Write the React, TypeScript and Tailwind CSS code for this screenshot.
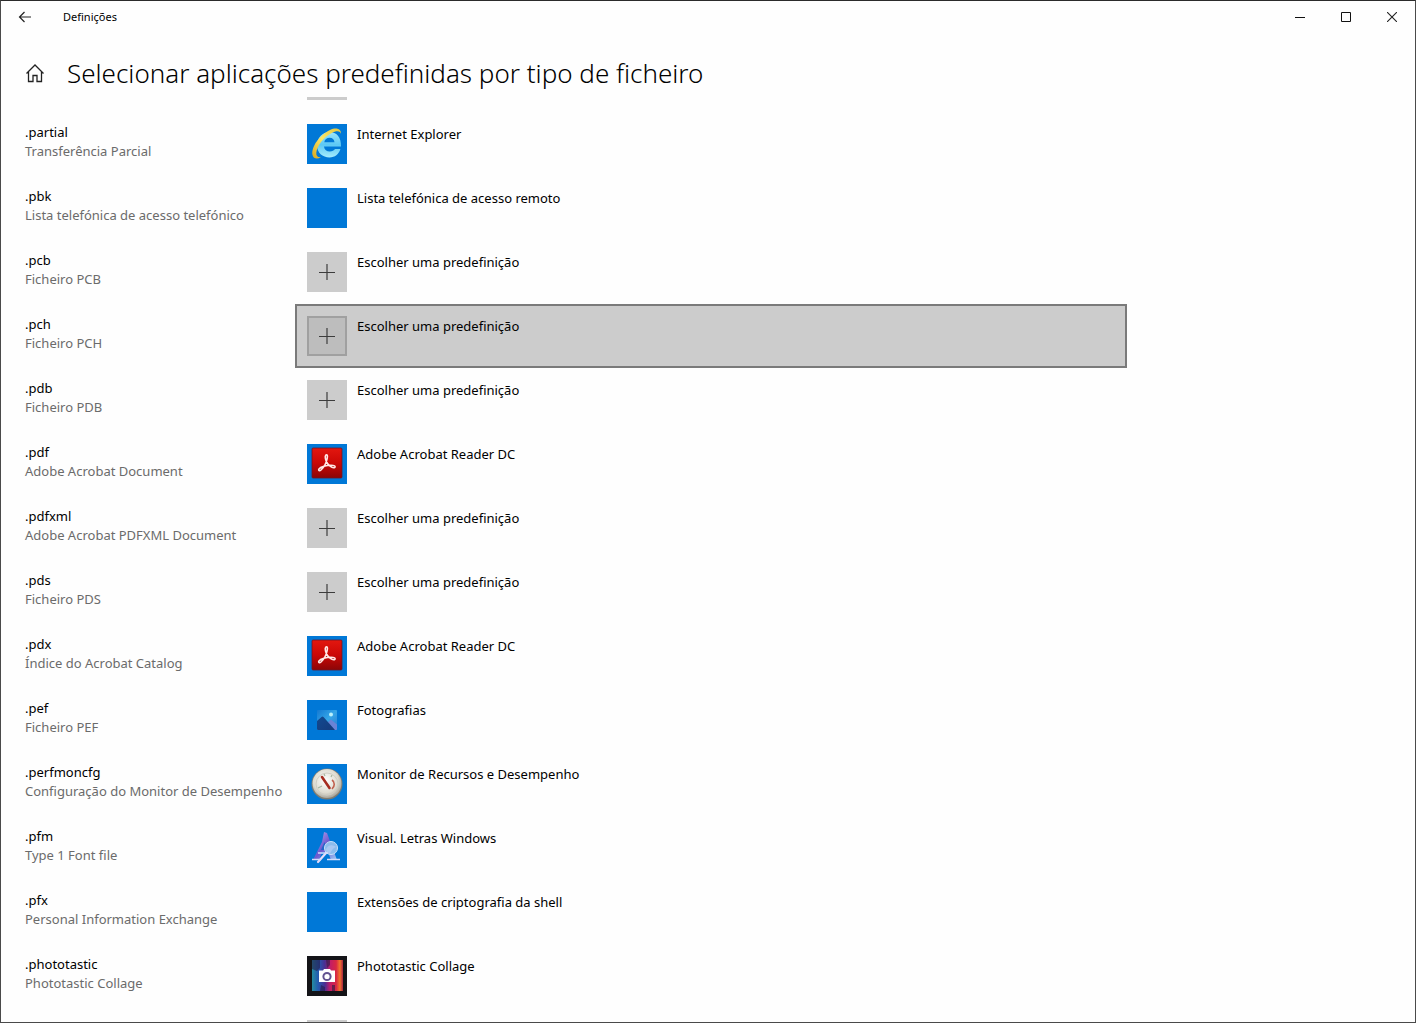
import { useLayoutEffect, useRef, useState } from "react";
import type { ReactNode } from "react";

type IconName = "choose" | "blank" | "ie" | "acrobat" | "photos" | "perfmon" | "fonts" | "phototastic";

interface FileType {
  ext: string;
  description: string;
  app: string;
  icon: IconName;
}

const CHOOSE = "Escolher uma predefinição";
const SCROLL_START = 49;

const fileTypes: FileType[] = [
  { ext: "", description: "", app: "", icon: "choose" },
  { ext: ".partial", description: "Transferência Parcial", app: "Internet Explorer", icon: "ie" },
  { ext: ".pbk", description: "Lista telefónica de acesso telefónico", app: "Lista telefónica de acesso remoto", icon: "blank" },
  { ext: ".pcb", description: "Ficheiro PCB", app: CHOOSE, icon: "choose" },
  { ext: ".pch", description: "Ficheiro PCH", app: CHOOSE, icon: "choose" },
  { ext: ".pdb", description: "Ficheiro PDB", app: CHOOSE, icon: "choose" },
  { ext: ".pdf", description: "Adobe Acrobat Document", app: "Adobe Acrobat Reader DC", icon: "acrobat" },
  { ext: ".pdfxml", description: "Adobe Acrobat PDFXML Document", app: CHOOSE, icon: "choose" },
  { ext: ".pds", description: "Ficheiro PDS", app: CHOOSE, icon: "choose" },
  { ext: ".pdx", description: "Índice do Acrobat Catalog", app: "Adobe Acrobat Reader DC", icon: "acrobat" },
  { ext: ".pef", description: "Ficheiro PEF", app: "Fotografias", icon: "photos" },
  { ext: ".perfmoncfg", description: "Configuração do Monitor de Desempenho", app: "Monitor de Recursos e Desempenho", icon: "perfmon" },
  { ext: ".pfm", description: "Type 1 Font file", app: "Visual. Letras Windows", icon: "fonts" },
  { ext: ".pfx", description: "Personal Information Exchange", app: "Extensões de criptografia da shell", icon: "blank" },
  { ext: ".phototastic", description: "Phototastic Collage", app: "Phototastic Collage", icon: "phototastic" },
  { ext: "", description: "", app: "", icon: "choose" },
];

const Svg = ({ children }: { children: ReactNode }) => (
  <svg viewBox="0 0 40 40" className="size-full" aria-hidden="true">
    {children}
  </svg>
);

const icons: Record<IconName, ReactNode> = {
  blank: null,
  choose: (
    <Svg>
      <path d="M12 20.500h16M20 12v16" stroke="#3c3c3c" strokeWidth="1.200" fill="none" />
    </Svg>
  ),
  ie: (
    <Svg>
      <defs>
        <linearGradient id="ieBlue" x1="0" y1="0" x2="0" y2="1">
          <stop offset="0" stopColor="#9fe6fb" />
          <stop offset="0.500" stopColor="#5cc8f4" />
          <stop offset="1" stopColor="#a5ecfc" />
        </linearGradient>
        <linearGradient id="ieRing" x1="0" y1="1" x2="1" y2="0">
          <stop offset="0" stopColor="#d9a81c" />
          <stop offset="0.500" stopColor="#fbe667" />
          <stop offset="1" stopColor="#e3c43f" />
        </linearGradient>
      </defs>
      <path
        d="M34 22.500H17c.3 3.300 2.700 5 5.800 5 2.500 0 4.200-.9 5.200-2.400h5.400C31.700 30.400 28 33.500 22.500 33.500 15.500 33.500 10 28.800 10 21.300 10 13.500 15.700 8 22.500 8 29.500 8 34.300 13 34 22.500zM27.500 18.200c-.3-2.700-2-4.400-4.900-4.400s-4.900 1.700-5.300 4.400z"
        fill="url(#ieBlue)"
        fillRule="evenodd"
      />
      <path
        d="M34 10C34.500 5 29.500 2.800 23 6 12.500 11 4 23 5.500 31c.8 4 4.800 4.500 8.500 2.200-3.200.4-5-1-4.700-4.400.7-7 7-15.500 15-19.600 5-2.500 9-2.700 9.700.8z"
        fill="url(#ieRing)"
      />
    </Svg>
  ),
  acrobat: (
    <Svg>
      <defs>
        <linearGradient id="pdfRed" x1="0" y1="0" x2="0" y2="1">
          <stop offset="0" stopColor="#e3170f" />
          <stop offset="0.500" stopColor="#cb0806" />
          <stop offset="1" stopColor="#8b0507" />
        </linearGradient>
      </defs>
      <rect x="5" y="4" width="30" height="30" rx="1" fill="url(#pdfRed)" stroke="#691728" strokeWidth="0.800" />
      <path
        d="M18.700 11.200c1.200-1.400 2.200.3 1.500 3.200-.8 4-3.700 9.300-6.200 11.600-1.500 1.300-3 .5-2-1 1.500-2.200 7.500-3.800 12-3.800 3.200 0 4.800 1.200 3.800 2.200-1.300 1.200-5-.6-7.300-3.900-1.900-2.800-2.900-6.900-1.800-8.300z"
        fill="none"
        stroke="#ffe9e6"
        strokeWidth="1.600"
      />
    </Svg>
  ),
  photos: (
    <Svg>
      <defs>
        <linearGradient id="photoSky" x1="0" y1="0" x2="1" y2="1">
          <stop offset="0" stopColor="#1479d2" />
          <stop offset="0.500" stopColor="#35a6e8" />
          <stop offset="1" stopColor="#2c79cf" />
        </linearGradient>
        <linearGradient id="photoHill" x1="0" y1="0" x2="1" y2="1">
          <stop offset="0" stopColor="#124a91" />
          <stop offset="1" stopColor="#153b7c" />
        </linearGradient>
      </defs>
      <rect x="10" y="10" width="20" height="20" rx="1" fill="url(#photoSky)" />
      <path d="M19 24l5-4.500 6 5V29a1 1 0 0 1-1 1h-9z" fill="#6a83d6" />
      <path d="M10 21l4.500-4a1.500 1.500 0 0 1 2 0L28 30H11a1 1 0 0 1-1-1z" fill="url(#photoHill)" />
      <circle cx="24" cy="14.500" r="2" fill="#b8f0fb" />
    </Svg>
  ),
  perfmon: (
    <Svg>
      <defs>
        <radialGradient id="dial" cx="0.450" cy="0.400" r="0.600">
          <stop offset="0" stopColor="#ffffff" />
          <stop offset="0.700" stopColor="#dedbd0" />
          <stop offset="1" stopColor="#aaa79d" />
        </radialGradient>
      </defs>
      <circle cx="20" cy="20" r="15.500" fill="#817c70" />
      <circle cx="20" cy="19.500" r="14.500" fill="url(#dial)" />
      <circle cx="20" cy="20" r="11" fill="none" stroke="#d0cec4" strokeWidth="1" />
      <path d="M15 13l7.500 11" stroke="#a62c20" strokeWidth="2.600" strokeLinecap="round" />
      <path d="M25 16c3 2 3 6 0 9" stroke="#c0604e" strokeWidth="1.600" fill="none" />
      <path d="M11 24l4-2M17 10l1 2M25 11l-1 2" stroke="#a6b6a0" strokeWidth="1.200" />
    </Svg>
  ),
  fonts: (
    <Svg>
      <defs>
        <linearGradient id="fontA" x1="0" y1="0" x2="1" y2="1">
          <stop offset="0" stopColor="#c8b5f4" />
          <stop offset="0.500" stopColor="#6d57ce" />
          <stop offset="1" stopColor="#9ccaf6" />
        </linearGradient>
      </defs>
      <path d="M17 4l3 1 10 27h-6l-3-8h-6l-3 8H6l9-18z" fill="url(#fontA)" />
      <path d="M17.500 14l-3.500 8h6z" fill="#2466c9" />
      <circle cx="24" cy="20" r="6.500" fill="#8dbcec" stroke="#c9e2fa" strokeWidth="1" />
      <path d="M19 21c3-5 7-4 10-2-3 1-5 4-6 7-2-1-4-2-4-5z" fill="#a9c8f2" />
      <path d="M19 25L11 34" stroke="#e6dcfa" strokeWidth="2.200" strokeLinecap="round" />
      <path d="M5 31.500h9M20 31.500h13M11 25h10" stroke="#d4dcfb" strokeWidth="1.600" />
    </Svg>
  ),
  phototastic: (
    <Svg>
      <defs>
        <linearGradient id="collage" x1="0" y1="0" x2="1" y2="0">
          <stop offset="0" stopColor="#258da0" />
          <stop offset="0.200" stopColor="#245bb0" />
          <stop offset="0.420" stopColor="#4b2d91" />
          <stop offset="0.580" stopColor="#c01d68" />
          <stop offset="0.780" stopColor="#d92743" />
          <stop offset="0.900" stopColor="#f0742d" />
          <stop offset="1" stopColor="#a62340" />
        </linearGradient>
      </defs>
      <rect width="40" height="40" fill="#141418" />
      <rect x="5" y="4" width="31" height="31" fill="url(#collage)" />
      <path d="M5 4h8v8l-3 3-5-2zM19 4h4v5l-3 3zM14 29l4 2v4h-5zM25 29h3v6h-3z" fill="#251d48" opacity="0.600" />
      <path d="M12 14.500h4l1-1.500h6l1 1.500h4V26H12z" fill="#fff" />
      <circle cx="20" cy="20.500" r="3.600" fill="#fff" stroke="#625390" strokeWidth="2" />
    </Svg>
  ),
};

const AppIcon = ({ name, selected }: { name: IconName; selected: boolean }) => {
  let tile = "bg-[#0078d7]";
  if (name === "choose") {
    tile = selected ? "bg-[#bdbdbd] outline-2 -outline-offset-2 outline-[#a0a0a0]" : "bg-[#cccccc]";
  }
  return <span className={`block size-10 shrink-0 ${tile}`}>{icons[name]}</span>;
};

interface RowProps {
  item: FileType;
  selected: boolean;
  onSelect: () => void;
}

const FileTypeRow = ({ item, selected, onSelect }: RowProps) => (
  <li className="grid grid-cols-[270px_minmax(0,832px)]">
    <div className="h-16 whitespace-nowrap pt-[11px] text-[13px] leading-[19px]">
      <div className="text-black">{item.ext}</div>
      <div className="text-[#6b6b6b]">{item.description}</div>
    </div>
    <button
      type="button"
      aria-label={item.app || CHOOSE}
      onClick={onSelect}
      className={`flex h-16 items-start gap-[10px] border-2 p-[10px] text-left text-[13px] leading-5 text-black outline-none ${
        selected ? "border-[#7a7a7a] bg-[#cccccc]" : "border-transparent"
      }`}
    >
      <AppIcon name={item.icon} selected={selected} />
      <span>{item.app}</span>
    </button>
  </li>
);

const TitleBar = () => (
  <header className="flex h-8 shrink-0 items-center justify-between">
    <div className="flex h-full items-center">
      <button type="button" aria-label="Retroceder" className="flex h-full w-12 items-center justify-center">
        <svg width="14" height="12" viewBox="0 0 14 12" fill="none" stroke="#222" strokeWidth="1.200" aria-hidden="true">
          <path d="M13 6H1.500M6.500 1L1.500 6l5 5" />
        </svg>
      </button>
      <span className="pl-[14px] text-[11px] leading-4 text-black">Definições</span>
    </div>
    <div className="flex h-full">
      <button type="button" aria-label="Minimizar" className="flex w-[46px] items-center justify-center">
        <svg width="10" height="10" viewBox="0 0 10 10" stroke="#111" aria-hidden="true">
          <path d="M0 5.500h10" />
        </svg>
      </button>
      <button type="button" aria-label="Maximizar" className="flex w-[46px] items-center justify-center">
        <svg width="10" height="10" viewBox="0 0 10 10" fill="none" stroke="#111" aria-hidden="true">
          <path d="M.5.5h9v9h-9z" />
        </svg>
      </button>
      <button type="button" aria-label="Fechar" className="flex w-[46px] items-center justify-center">
        <svg width="10" height="10" viewBox="0 0 10 10" stroke="#222" strokeWidth="1.100" aria-hidden="true">
          <path d="M0 0l10 10M10 0L0 10" />
        </svg>
      </button>
    </div>
  </header>
);

export default function App() {
  const [selected, setSelected] = useState(4);
  const listRef = useRef<HTMLDivElement>(null);

  useLayoutEffect(() => {
    if (listRef.current) listRef.current.scrollTop = SCROLL_START;
  }, []);

  return (
    <div className="flex h-screen flex-col border border-[#4a4a4a] border-t-[#2b2b2b] bg-[#fefefe] font-['Noto_Sans','Open_Sans',sans-serif]">
      <TitleBar />

      <div className="flex h-16 shrink-0 items-center gap-[22px] px-6 pt-4">
        <button type="button" aria-label="Base" className="flex size-5 items-center justify-center">
          <svg width="20" height="20" viewBox="0 0 20 20" fill="none" stroke="#222" strokeWidth="1.300" aria-hidden="true">
            <path d="M1.500 10.500L10 2l8.500 8.500M3.500 9v9.500h4.500v-6h4v6h4.500V9" />
          </svg>
        </button>
        <h1 className="text-[26px] font-[350] leading-9 text-black">
          Selecionar aplicações predefinidas por tipo de ficheiro
        </h1>
      </div>

      <main ref={listRef} className="min-h-0 flex-1 overflow-y-auto [scrollbar-width:none]">
        <ul className="pl-6">
          {fileTypes.map((item, index) => (
            <FileTypeRow
              key={index}
              item={item}
              selected={index === selected}
              onSelect={() => setSelected(index)}
            />
          ))}
        </ul>
      </main>
    </div>
  );
}
